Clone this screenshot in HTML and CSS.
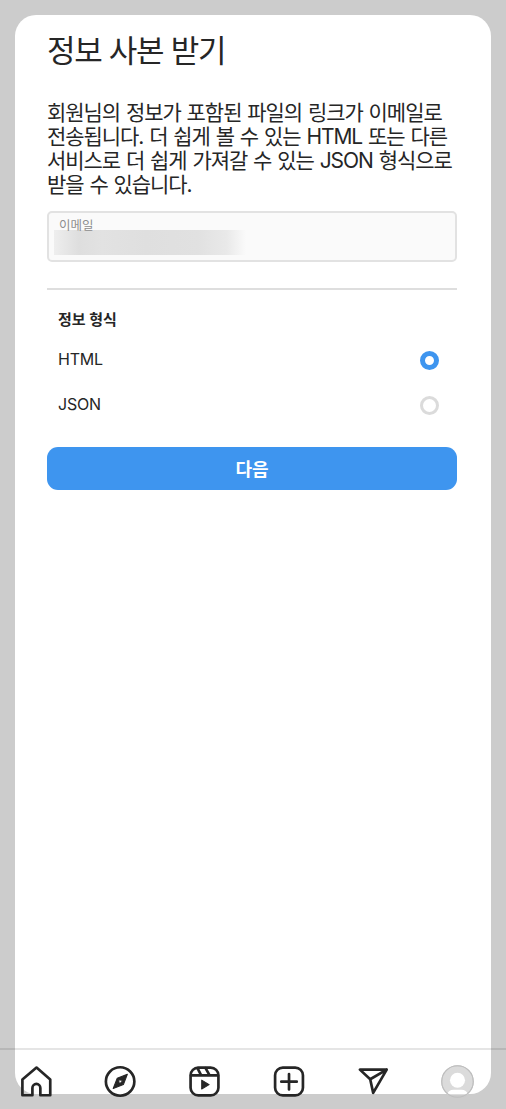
FILE: index.html
```
<!DOCTYPE html>
<html lang="ko">
<head>
    <meta charset="UTF-8">
    <meta content="width=device-width, initial-scale=1.0" name="viewport">
    <title>정보 사본 받기</title>
    <link rel="stylesheet" href="styles.css">
</head>
<body>
<main class="card">
    <h1 class="title">정보 사본 받기</h1>
    <p class="description">회원님의 정보가 포함된 파일의 링크가 이메일로<br>전송됩니다. 더 쉽게 볼 수 있는 HTML 또는 다른<br>서비스로 더 쉽게 가져갈 수 있는 JSON 형식으로<br>받을 수 있습니다.</p>
    <div class="email-field">
        <span class="email-label">이메일</span>
        <div class="email-value"></div>
    </div>
    <section class="format">
        <h2 class="format-title">정보 형식</h2>
        <label class="option">HTML <input class="radio" name="format" type="radio" value="html" checked></label>
        <label class="option">JSON <input class="radio" name="format" type="radio" value="json"></label>
    </section>
    <button class="next-btn">다음</button>
</main>
<nav class="bottom-nav">
    <a class="nav-item">
        <svg class="icon" viewBox="0 0 32 32">
            <path d="M13 29.300H3.300V14L17 2.500 30.300 14v15.300H20.700v-7.100a3.850 3.850 0 0 0-7.700 0z"/>
        </svg>
    </a>
    <a class="nav-item">
        <svg class="icon" viewBox="0 0 32 32">
            <circle cx="16.600" cy="16" r="13.800"/>
            <path class="solid" fill-rule="evenodd" d="M23.600 9l-3.800 10L9.900 22.800l3.900-9.900zM15 14.300l1 4.200 3.500-3.500z"/>
        </svg>
    </a>
    <a class="nav-item">
        <svg class="icon" viewBox="0 0 32 32">
            <rect x="2.500" y="2.500" width="27" height="27" rx="7.500"/>
            <path d="M3 10h26M9.200 3l3.600 7M17 3l4 7"/>
            <path class="solid" d="M13.300 14.700v8.600l7.200-4.300z"/>
        </svg>
    </a>
    <a class="nav-item">
        <svg class="icon" viewBox="0 0 32 32">
            <rect x="3" y="2.500" width="27" height="27" rx="7.500"/>
            <path d="M16.500 8.700v15M9 16.200h15"/>
        </svg>
    </a>
    <a class="nav-item">
        <svg class="icon" viewBox="0 0 32 32">
            <path d="M2.800 4.500h26L15.700 27l-2.900-13.200zM12.800 13.800l16-9.300"/>
        </svg>
    </a>
    <a class="nav-item">
        <svg class="avatar" viewBox="0 0 32 32">
            <circle cx="16" cy="16" r="15.300" fill="#dbdbdb" stroke="#c8c8c8"/>
            <circle cx="16" cy="14.800" r="7.300" fill="#fff"/>
            <path d="M6 28.500c.8-3 3-4.500 6-4.500h8c3 0 5.200 1.500 6 4.500z" fill="#fff"/>
            <path d="M5.200 28.500h21.600a15.300 15.300 0 0 1-21.600 0z" fill="#cbcbcb"/>
            <circle cx="16" cy="16" r="15.300" fill="none" stroke="#bebebe"/>
        </svg>
    </a>
</nav>
</body>
</html>
```
FILE: styles.css
```
* {
    box-sizing: border-box;
}

body {
    font-family: Inter, "Noto Sans CJK KR", sans-serif;
    margin: 0;
    padding: 15px;
    height: 1109px;
    background: #ccc;
    color: #262626;
}

.card {
    height: 1079px;
    padding: 16px 34px 0 32px;
    border-radius: 21px;
    background: #fff;
}

.title {
    margin: 0;
    font-size: 31px;
    font-weight: 400;
    line-height: 40px;
    letter-spacing: -1.3px;
}

.description {
    margin: 30px 0 14px;
    font-size: 21px;
    line-height: 24px;
    letter-spacing: -1.05px;
    word-spacing: 1px;
    white-space: nowrap;
}

.email-field {
    height: 51px;
    padding: 6px 5px;
    border: 2px solid #e2e2e2;
    border-radius: 5px;
    background: #fafafa;
}

.email-label {
    display: block;
    height: 11px;
    padding-left: 5px;
    font-size: 12.5px;
    line-height: 13px;
    color: #8e8e8e;
}

/* address is hidden from view */
.email-value {
    width: 192px;
    height: 25px;
    background: linear-gradient(90deg, #eee, #dedede 13%, #e2e2e2 25%, #dfdfdf 48%, #e1e1e1 75%, #e9e9e9 90%, #fafafa);
}

.format {
    margin-top: 26px;
    padding: 19px 18px 0 11px;
    border-top: 2px solid #dedede;
}

.format-title {
    margin: 0 0 16px;
    font-size: 15px;
    font-weight: 700;
    line-height: 22px;
}

.option {
    display: flex;
    justify-content: space-between;
    align-items: center;
    height: 25px;
    padding-bottom: 2px;
    margin-bottom: 20px;
    font-size: 16px;
    letter-spacing: -0.2px;
}

.radio {
    appearance: none;
    width: 19px;
    height: 19px;
    margin: 4px 0 0;
    border: 3px solid #dbdbdb;
    border-radius: 50%;
}

.radio:checked {
    border: 5.5px solid #3e95ef;
}

.next-btn {
    display: block;
    width: 100%;
    height: 43px;
    margin-top: 30px;
    padding: 0 0 2px;
    border: 0;
    border-radius: 11px;
    background: #3e95ef;
    color: #fff;
    font-family: inherit;
    font-size: 18px;
    font-weight: 700;
}

.bottom-nav {
    position: fixed;
    left: 0;
    right: 0;
    bottom: 0;
    display: flex;
    justify-content: space-between;
    height: 61px;
    padding: 15px 32px 0 19px;
    border-top: 2px solid rgba(0, 0, 0, 0.1);
}

.nav-item {
    display: flex;
    width: 33px;
    height: 33px;
}

.icon {
    width: 33px;
    height: 33px;
    fill: none;
    stroke: #262626;
    stroke-width: 2.6;
    stroke-linejoin: round;
    stroke-linecap: round;
}

.icon .solid {
    fill: #262626;
    stroke-width: 1;
}

.avatar {
    width: 33px;
    height: 33px;
}
```
